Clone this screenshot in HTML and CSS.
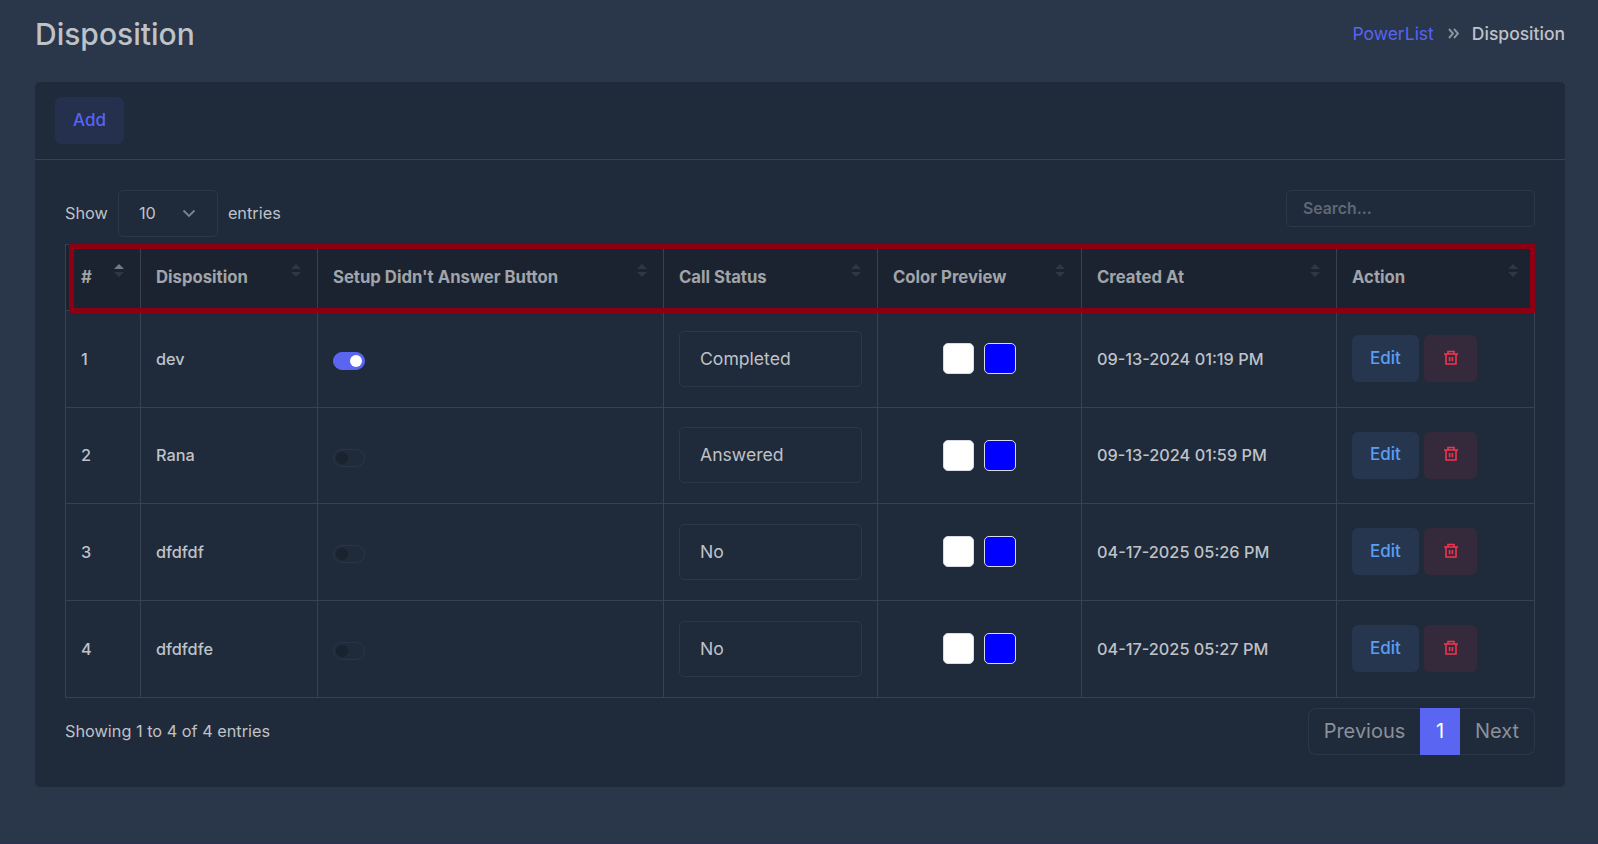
FILE: index.html
```html
<!DOCTYPE html>
<html lang="en">
<head>
  <meta charset="UTF-8" />
  <meta name="viewport" content="width=device-width, initial-scale=1" />
  <title>Disposition</title>
  <link rel="stylesheet" href="styles.css">
</head>
<body>
  <svg class="sprite" width="0" height="0">
    <symbol id="trash" viewBox="0 0 16 16">
      <path d="M1 4H15M5 4V1.5H11V4M3 4V14H13V4M6.6 7V11.2M9.4 7V11.2" fill="none" stroke="currentColor" stroke-width="1.6"/>
    </symbol>
  </svg>

  <header class="page-header">
    <h1>Disposition</h1>
    <nav class="breadcrumb">
      <a href="#">PowerList</a>
      <svg class="sep" width="11" height="11" viewBox="0 0 11 11"><path d="M1 1L5 5.5L1 10M6 1L10 5.5L6 10" fill="none" stroke="currentColor" stroke-width="1.9"/></svg>
      <span>Disposition</span>
    </nav>
  </header>

  <main class="card">
    <div class="card-header">
      <button class="btn btn-add">Add</button>
    </div>
    <div class="card-body">
      <div class="table-tools">
        <label class="length">
          <span>Show</span>
          <span class="select">10
            <svg width="14" height="9" viewBox="0 0 14 9"><path d="M1.5 1.5L7 7L12.5 1.5" fill="none" stroke="currentColor" stroke-width="1.8"/></svg>
          </span>
          <span>entries</span>
        </label>
        <input class="search" type="text" placeholder="Search..." />
      </div>

      <div class="table-wrap">
        <table>
          <colgroup>
            <col class="c-num"><col class="c-name"><col class="c-setup"><col class="c-status"><col class="c-color"><col class="c-date"><col class="c-action">
          </colgroup>
          <thead>
            <tr>
              <th class="asc">#</th>
              <th>Disposition</th>
              <th>Setup Didn't Answer Button</th>
              <th>Call Status</th>
              <th>Color Preview</th>
              <th>Created At</th>
              <th>Action</th>
            </tr>
          </thead>
          <tbody>
            <tr>
              <td>1</td>
              <td>dev</td>
              <td><span class="switch on"></span></td>
              <td><div class="status">Completed</div></td>
              <td><div class="swatches"><span class="swatch white"></span><span class="swatch blue"></span></div></td>
              <td>09-13-2024 01:19 PM</td>
              <td><div class="actions"><button class="btn btn-edit">Edit</button><button class="btn btn-delete"><svg width="16" height="16"><use href="#trash"/></svg></button></div></td>
            </tr>
            <tr>
              <td>2</td>
              <td>Rana</td>
              <td><span class="switch"></span></td>
              <td><div class="status">Answered</div></td>
              <td><div class="swatches"><span class="swatch white"></span><span class="swatch blue"></span></div></td>
              <td>09-13-2024 01:59 PM</td>
              <td><div class="actions"><button class="btn btn-edit">Edit</button><button class="btn btn-delete"><svg width="16" height="16"><use href="#trash"/></svg></button></div></td>
            </tr>
            <tr>
              <td>3</td>
              <td>dfdfdf</td>
              <td><span class="switch"></span></td>
              <td><div class="status">No</div></td>
              <td><div class="swatches"><span class="swatch white"></span><span class="swatch blue"></span></div></td>
              <td>04-17-2025 05:26 PM</td>
              <td><div class="actions"><button class="btn btn-edit">Edit</button><button class="btn btn-delete"><svg width="16" height="16"><use href="#trash"/></svg></button></div></td>
            </tr>
            <tr>
              <td>4</td>
              <td>dfdfdfe</td>
              <td><span class="switch"></span></td>
              <td><div class="status">No</div></td>
              <td><div class="swatches"><span class="swatch white"></span><span class="swatch blue"></span></div></td>
              <td>04-17-2025 05:27 PM</td>
              <td><div class="actions"><button class="btn btn-edit">Edit</button><button class="btn btn-delete"><svg width="16" height="16"><use href="#trash"/></svg></button></div></td>
            </tr>
          </tbody>
        </table>
        <div class="highlight"></div>
      </div>

      <div class="table-footer">
        <div class="info">Showing 1 to 4 of 4 entries</div>
        <div class="pagination">
          <a class="page prev">Previous</a>
          <a class="page active">1</a>
          <a class="page next">Next</a>
        </div>
      </div>
    </div>
  </main>
</body>
</html>
```
FILE: styles.css
```css
* {
  margin: 0;
  padding: 0;
  box-sizing: border-box;
}

body {
  background: #2a3649;
  height: 100vh;
  overflow: hidden;
  padding: 0 33px 0 35px;
  border-bottom: 1px solid #2b3150;
  font-family: Inter, sans-serif;
  font-size: 16.3px;
  color: #bfc2c7;
}

.sprite {
  display: block;
}

.page-header {
  display: flex;
  justify-content: space-between;
  align-items: center;
  height: 68px;
}

h1 {
  font-size: 30px;
  font-weight: 500;
}

.breadcrumb {
  display: flex;
  align-items: center;
  padding-bottom: 1px;
  font-size: 17.5px;
}

.breadcrumb a {
  color: #5864f2;
  text-decoration: none;
}

.breadcrumb .sep {
  margin: 0 13px 0 14px;
  color: #8f959e;
}

.breadcrumb span {
  font-weight: 500;
}

.card {
  margin-top: 14px;
  height: 705px;
  background: #1f2a3b;
  border-radius: 5px;
}

.card-header {
  height: 78px;
  padding: 15px 20px;
  border-bottom: 1px solid #364152;
}

.card-body {
  padding: 30px;
}

.btn {
  height: 47px;
  padding-bottom: 2px;
  border: none;
  border-radius: 6px;
  font: 500 17px Inter, sans-serif;
  cursor: pointer;
}

.btn-add {
  width: 69px;
  background: #252f4e;
  color: #5864f2;
}

.table-tools {
  display: flex;
  justify-content: space-between;
  align-items: flex-start;
  height: 54px;
}

.length {
  display: flex;
  align-items: center;
  gap: 10px;
}

.length > span:not(.select) {
  padding-bottom: 2px;
}

.select {
  display: flex;
  align-items: center;
  justify-content: space-between;
  width: 100px;
  height: 47px;
  padding: 0 21px 1px 20px;
  border: 1px solid #2c3748;
  border-radius: 5px;
}

.select svg {
  color: #7c838e;
}

.search {
  width: 249px;
  height: 37px;
  padding: 0 16px;
  background: transparent;
  border: 1px solid #2c3748;
  border-radius: 5px;
  font: 600 15.8px Inter, sans-serif;
  color: #bfc2c7;
}

.search::placeholder {
  color: #5f6874;
}

.table-wrap {
  position: relative;
}

table {
  width: 1470px;
  table-layout: fixed;
  border-collapse: collapse;
}

.c-num { width: 75px; }
.c-name { width: 177px; }
.c-setup { width: 346px; }
.c-status { width: 214px; }
.c-color { width: 204px; }
.c-date { width: 255px; }
.c-action { width: 198px; }

th, td {
  border: 1px solid #364152;
  padding: 0 15px;
  text-align: left;
  vertical-align: middle;
}

th {
  position: relative;
  height: 66px;
  padding-bottom: 2px;
  background: #1b2330;
  font-size: 16.7px;
  font-weight: 700;
  color: #a1a4a9;
}

td {
  height: 97px;
  padding-bottom: 1px;
  font-weight: 500;
}

tbody tr:nth-child(2) td {
  height: 96px;
}

/* sort arrows */
th::before, th::after {
  content: "";
  position: absolute;
  right: 16px;
  border: 5px solid transparent;
}

th::before {
  top: 14px;
  border-bottom-color: #2e3744;
}

th::after {
  top: 27px;
  border-top-color: #2e3744;
}

th.asc::before {
  border-bottom-color: #747a82;
}

/* frame around the heading row */
.highlight {
  position: absolute;
  top: 0;
  left: 4px;
  width: 1466px;
  height: 69px;
  border: 5px solid #8b0013;
}

.switch {
  display: flex;
  align-items: center;
  width: 32px;
  height: 18px;
  padding: 0 2px;
  margin-top: 5px;
  border: 1px solid #2a3546;
  border-radius: 9px;
}

.switch::before {
  content: "";
  width: 12px;
  height: 12px;
  border-radius: 50%;
  background: #19232f;
}

.switch.on {
  justify-content: flex-end;
  background: #5a66f1;
  border-color: #5a66f1;
}

.switch.on::before {
  background: #fff;
}

.status {
  height: 56px;
  padding-left: 20px;
  border: 1px solid #2c3748;
  border-radius: 5px;
  font-size: 17.6px;
  font-weight: 400;
  line-height: 54px;
}

.swatches {
  display: flex;
  justify-content: center;
  gap: 10px;
}

.swatch {
  width: 31px;
  height: 31px;
  border: 1px solid #d8dbe8;
  border-radius: 5px;
}

.white { background: #fff; }
.blue { background: #00f; width: 32px; }

.actions {
  display: flex;
  gap: 5px;
}

.btn-edit {
  width: 67px;
  background: #26364f;
  color: #5b9ff5;
}

.btn-delete {
  display: flex;
  align-items: center;
  justify-content: center;
  width: 53px;
  background: #352a3c;
  color: #f2344f;
}

.table-footer {
  display: flex;
  justify-content: space-between;
  align-items: center;
  margin-top: 10px;
}

.info {
  padding-bottom: 2px;
}

.pagination {
  display: flex;
  height: 47px;
  font-size: 20px;
  line-height: 45px;
}

.page {
  border: 1px solid #2c3748;
  text-align: center;
  color: #8b9099;
}

.prev {
  width: 112px;
  border-right: none;
  border-radius: 8px 0 0 8px;
}

.next {
  width: 75px;
  border-left: none;
  border-radius: 0 8px 8px 0;
}

.page.active {
  width: 40px;
  background: #5a66f1;
  border-color: #5a66f1;
  color: #fff;
}
```
